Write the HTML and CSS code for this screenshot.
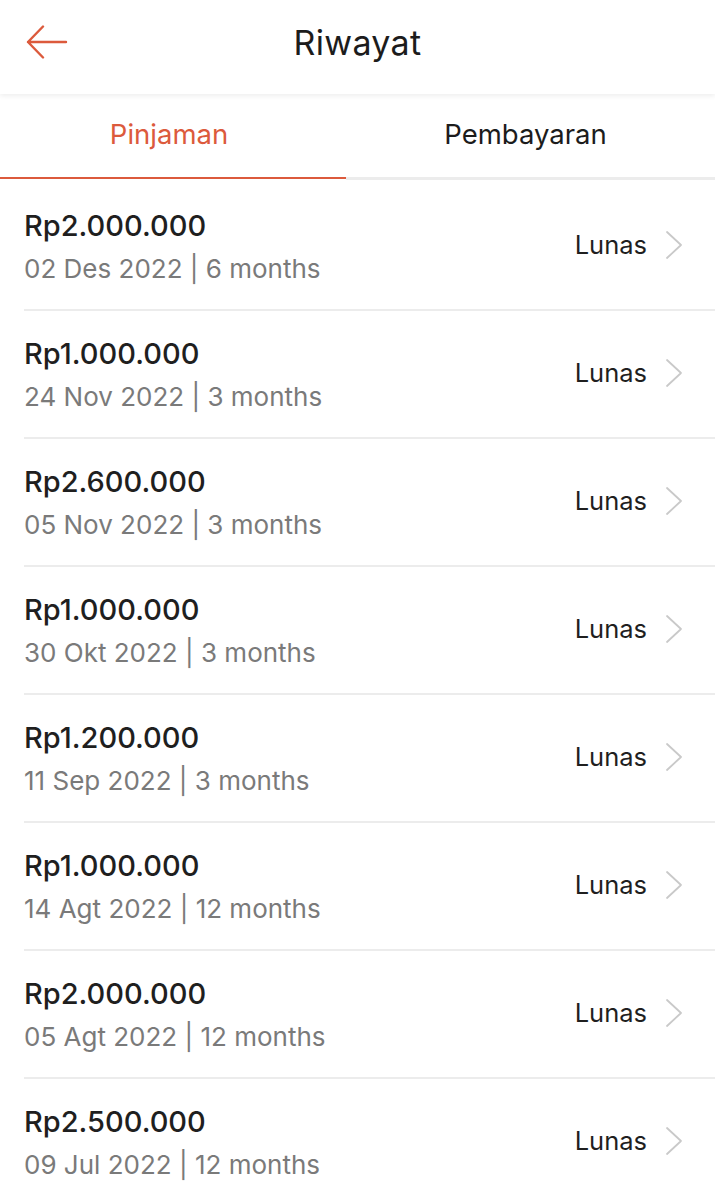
FILE: index.html
```html
<!DOCTYPE html>
<html lang="id">
<head>
<meta charset="utf-8">
<title>Riwayat</title>
<link rel="stylesheet" href="styles.css">
</head>
<body>
<div class="app">
  <header class="topbar">
    <div class="back">
      <svg width="42" height="34" viewBox="0 0 42 34" fill="none" stroke="#dc5a3c" stroke-width="2.4" stroke-linecap="round" stroke-linejoin="round"><path d="M40 17H2M17 1.5L2 17l15 15.5"/></svg>
    </div>
    <h1 class="title">Riwayat</h1>
    <div class="spacer"></div>
  </header>
  <nav class="tabs">
    <div class="tab active">Pinjaman</div>
    <div class="tab">Pembayaran</div>
  </nav>
  <ul class="list">
    <li class="row"><div class="info"><div class="amount">Rp2.000.000</div><div class="meta">02 Des 2022 | 6 months</div></div><div class="status">Lunas<svg class="chev" width="18" height="30" viewBox="0 0 18 30" fill="none" stroke="#c9c9c9" stroke-width="1.8" stroke-linecap="round" stroke-linejoin="round"><path d="M2 2l14 13L2 28"/></svg></div></li>
    <li class="row"><div class="info"><div class="amount">Rp1.000.000</div><div class="meta">24 Nov 2022 | 3 months</div></div><div class="status">Lunas<svg class="chev" width="18" height="30" viewBox="0 0 18 30" fill="none" stroke="#c9c9c9" stroke-width="1.8" stroke-linecap="round" stroke-linejoin="round"><path d="M2 2l14 13L2 28"/></svg></div></li>
    <li class="row"><div class="info"><div class="amount">Rp2.600.000</div><div class="meta">05 Nov 2022 | 3 months</div></div><div class="status">Lunas<svg class="chev" width="18" height="30" viewBox="0 0 18 30" fill="none" stroke="#c9c9c9" stroke-width="1.8" stroke-linecap="round" stroke-linejoin="round"><path d="M2 2l14 13L2 28"/></svg></div></li>
    <li class="row"><div class="info"><div class="amount">Rp1.000.000</div><div class="meta">30 Okt 2022 | 3 months</div></div><div class="status">Lunas<svg class="chev" width="18" height="30" viewBox="0 0 18 30" fill="none" stroke="#c9c9c9" stroke-width="1.8" stroke-linecap="round" stroke-linejoin="round"><path d="M2 2l14 13L2 28"/></svg></div></li>
    <li class="row"><div class="info"><div class="amount">Rp1.200.000</div><div class="meta">11 Sep 2022 | 3 months</div></div><div class="status">Lunas<svg class="chev" width="18" height="30" viewBox="0 0 18 30" fill="none" stroke="#c9c9c9" stroke-width="1.8" stroke-linecap="round" stroke-linejoin="round"><path d="M2 2l14 13L2 28"/></svg></div></li>
    <li class="row"><div class="info"><div class="amount">Rp1.000.000</div><div class="meta">14 Agt 2022 | 12 months</div></div><div class="status">Lunas<svg class="chev" width="18" height="30" viewBox="0 0 18 30" fill="none" stroke="#c9c9c9" stroke-width="1.8" stroke-linecap="round" stroke-linejoin="round"><path d="M2 2l14 13L2 28"/></svg></div></li>
    <li class="row"><div class="info"><div class="amount">Rp2.000.000</div><div class="meta">05 Agt 2022 | 12 months</div></div><div class="status">Lunas<svg class="chev" width="18" height="30" viewBox="0 0 18 30" fill="none" stroke="#c9c9c9" stroke-width="1.8" stroke-linecap="round" stroke-linejoin="round"><path d="M2 2l14 13L2 28"/></svg></div></li>
    <li class="row"><div class="info"><div class="amount">Rp2.500.000</div><div class="meta">09 Jul 2022 | 12 months</div></div><div class="status">Lunas<svg class="chev" width="18" height="30" viewBox="0 0 18 30" fill="none" stroke="#c9c9c9" stroke-width="1.8" stroke-linecap="round" stroke-linejoin="round"><path d="M2 2l14 13L2 28"/></svg></div></li>
  </ul>
</div>
</body>
</html>
```
FILE: styles.css
```css
* { box-sizing: border-box; }
html, body { margin: 0; padding: 0; background: #fff; }
body {
  font-family: Inter, "Liberation Sans", Arial, sans-serif;
  color: #1f1f1f;
  width: 715px;
  overflow: hidden;
}
.app { width: 715px; }
.topbar {
  height: 94px;
  padding-bottom: 10px;
  display: grid;
  grid-template-columns: 1fr auto 1fr;
  align-items: center;
  background: #fff;
  position: relative;
  z-index: 2;
  box-shadow: 0 2px 5px rgba(0,0,0,0.07);
}
.back { padding-left: 26px; display: flex; align-items: center; }
.back svg { display: block; }
.title {
  margin: 0;
  font-size: 34px;
  font-weight: 400;
  color: #1c1c1c;
  letter-spacing: 0.3px;
}
.tabs {
  display: flex;
  height: 86px;
  background: #fff;
}
.tab {
  flex: 1;
  display: flex;
  align-items: center;
  justify-content: center;
  font-size: 27.5px;
  color: #1c1c1c;
  border-bottom: 3px solid #ececec;
  padding-bottom: 3px;
  padding-right: 10px;
}
.tab.active {
  color: #dc5a3c;
  border-bottom: 2px solid #dc5a3c;
  margin-bottom: 1px;
  flex: 0 0 346px;
  padding-right: 8px;
}
.list { list-style: none; margin: 0; padding: 3px 0 0; }
.row {
  height: 128px;
  margin-left: 24px;
  padding-right: 32px;
  border-bottom: 2px solid #ececec;
  display: flex;
  align-items: center;
  justify-content: space-between;
}
.info { display: flex; flex-direction: column; padding-top: 2px; }
.amount {
  font-size: 29px;
  line-height: 40px;
  font-weight: 500;
  color: #1f1f1f;
}
.meta {
  font-size: 26px;
  line-height: 40px;
  margin-top: 3px;
  color: #7a7a7a;
}
.status {
  display: flex;
  align-items: center;
  gap: 18px;
  font-size: 25.5px;
  color: #1f1f1f;
  padding-bottom: 3px;
}
.chev { display: block; }
```
